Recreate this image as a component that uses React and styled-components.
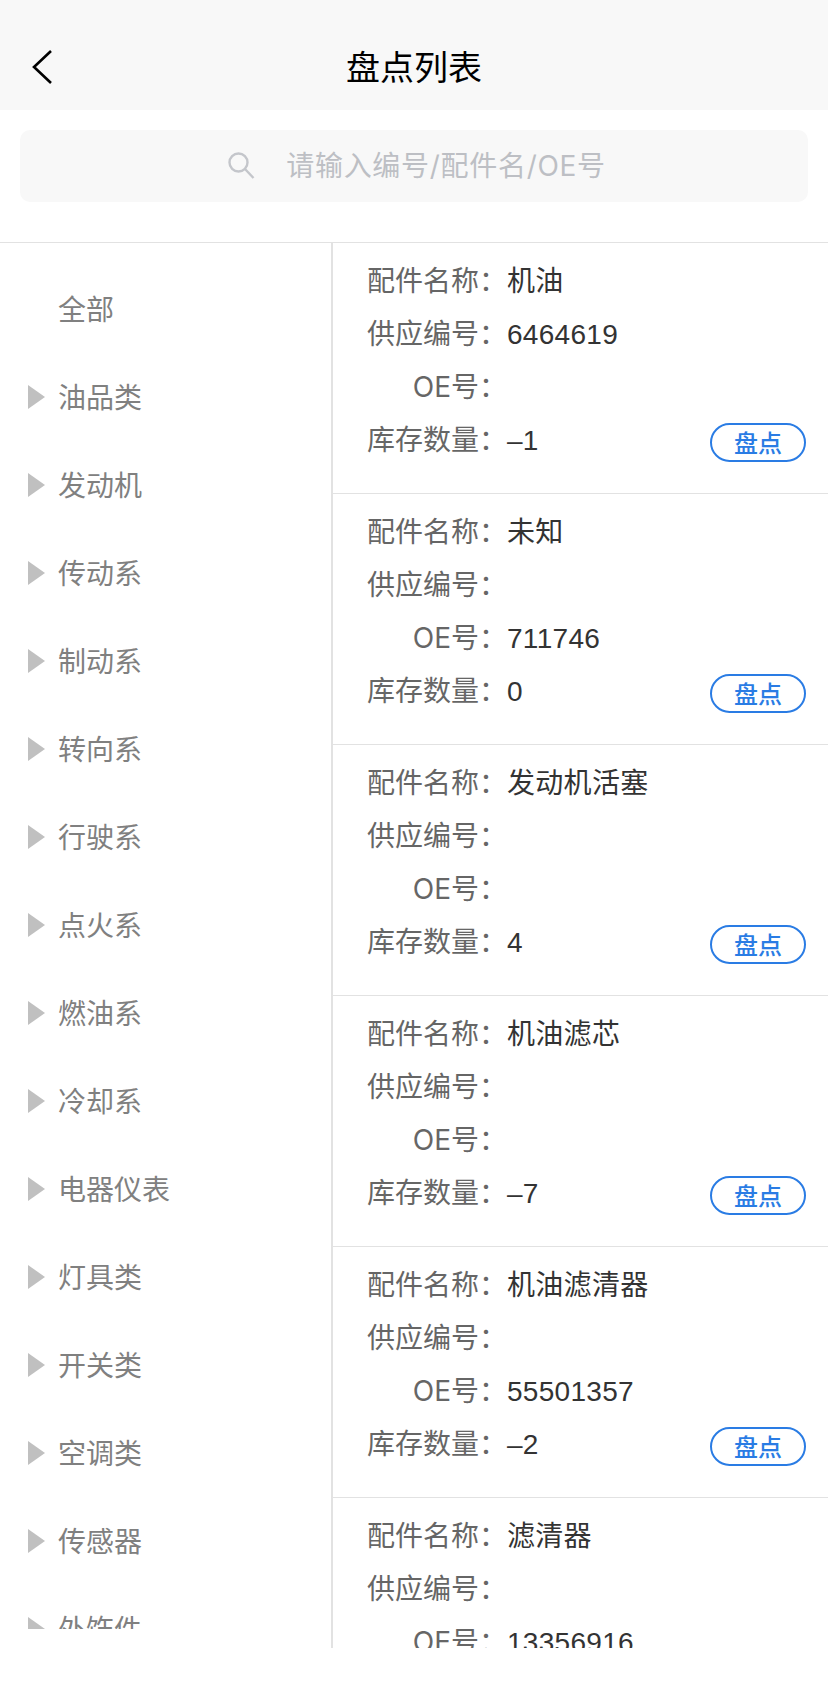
import React from 'react';
import styled, { createGlobalStyle } from 'styled-components';

const categories = ['全部', '油品类', '发动机', '传动系', '制动系', '转向系', '行驶系', '点火系', '燃油系', '冷却系', '电器仪表', '灯具类', '开关类', '空调类', '传感器', '外饰件'];

const parts = [
    { name: '机油', supply: '6464619', oe: '', stock: '–1' },
    { name: '未知', supply: '', oe: '711746', stock: '0' },
    { name: '发动机活塞', supply: '', oe: '', stock: '4' },
    { name: '机油滤芯', supply: '', oe: '', stock: '–7' },
    { name: '机油滤清器', supply: '', oe: '55501357', stock: '–2' },
    { name: '滤清器', supply: '', oe: '13356916', stock: '' },
];

function App() {
    return (
        <Page>
            <GlobalStyle />
            <Header>
                <BackButton>
                    <svg width="22" height="36" viewBox="0 0 22 36" fill="none">
                        <path d="M20 2 L3 18 L20 34" stroke="#000" strokeWidth="2.6" />
                    </svg>
                </BackButton>
                <Title>盘点列表</Title>
            </Header>

            <SearchBar>
                <svg width="28" height="28" viewBox="0 0 28 28" fill="none" stroke="#c4c6cb" strokeWidth="2.4">
                    <circle cx="10.5" cy="10.5" r="9" />
                    <path d="M17 17 L25.5 26" />
                </svg>
                <Placeholder>请输入编号/配件名/OE号</Placeholder>
            </SearchBar>

            <Main>
                <Sidebar>
                    {categories.map((name, i) => (
                        <Category key={name}>
                            <Caret $hidden={i === 0} />
                            {name}
                        </Category>
                    ))}
                </Sidebar>
                <PartList>
                    {parts.map(part => (
                        <PartItem key={part.name}>
                            <Row><Label>配件名称：</Label><Value>{part.name}</Value></Row>
                            <Row><Label>供应编号：</Label><Value>{part.supply}</Value></Row>
                            <Row><Label>OE号：</Label><Value>{part.oe}</Value></Row>
                            <Row>
                                <Label>库存数量：</Label>
                                <Value>{part.stock}</Value>
                                <CheckButton>盘点</CheckButton>
                            </Row>
                        </PartItem>
                    ))}
                </PartList>
            </Main>
        </Page>
    );
}

const GlobalStyle = createGlobalStyle`
    html, body {
        margin: 0;
        padding: 0;
        background: #fff;
    }
    * {
        box-sizing: border-box;
    }
`;

const Page = styled.div`
    width: 828px;
    height: 1688px;
    overflow: hidden;
    background: #fff;
    font-family: "Noto Sans CJK SC", "Noto Sans", sans-serif;
    font-size: 28px;
`;

const Header = styled.div`
    position: relative;
    height: 110px;
    padding-top: 44px;
    background: #f8f8f8;
    display: flex;
    justify-content: center;
`;

const BackButton = styled.div`
    position: absolute;
    left: 31px;
    top: 49px;
    line-height: 0;
`;

const Title = styled.div`
    font-size: 34px;
    line-height: 44px;
    color: #000;
`;

const SearchBar = styled.div`
    margin: 20px 20px 40px;
    height: 72px;
    padding-left: 6px;
    border-radius: 10px;
    background: #f8f8f8;
    display: flex;
    align-items: center;
    justify-content: center;
    gap: 30px;
`;

const Placeholder = styled.span`
    padding-bottom: 4px;
    color: #bdbfc4;
    font-family: Inter, "Noto Sans CJK SC", sans-serif;
    font-size: 28px;
    letter-spacing: 0.7px;
`;

const Main = styled.div`
    display: flex;
    height: 1406px;
    border-top: 1px solid #e2e2e2;
    overflow: hidden;
`;

const Sidebar = styled.div`
    width: 331px;
    height: 1386px;
    padding-top: 21px;
    overflow: hidden;
    flex-shrink: 0;
`;

const Category = styled.div`
    height: 88px;
    padding-left: 28px;
    display: flex;
    align-items: center;
    gap: 13px;
    color: #808080;
    font-size: 28px;
`;

const Caret = styled.i`
    width: 0;
    height: 0;
    margin-top: 2px;
    border-style: solid;
    border-width: 12px 0 12px 17px;
    border-color: transparent transparent transparent #c0c0c0;
    visibility: ${props => (props.$hidden ? 'hidden' : 'visible')};
`;

const PartList = styled.div`
    flex: 1;
    border-left: 2px solid #e2e2e2;
`;

const PartItem = styled.div`
    height: 251px;
    padding: 12px 22px 0 34px;
    border-bottom: 1px solid #e2e2e2;
`;

const Row = styled.div`
    height: 53px;
    line-height: 53px;
    display: flex;
    align-items: baseline;
`;

const Label = styled.span`
    width: 140px;
    text-align: right;
    color: #666;
    font-family: Inter, "Noto Sans CJK SC", sans-serif;
    flex-shrink: 0;
`;

const Value = styled.span`
    color: #333;
    font-family: "Liberation Sans", "Noto Sans CJK SC", sans-serif;
    letter-spacing: 0.3px;
`;

const CheckButton = styled.div`
    align-self: flex-start;
    margin: 9px 0 0 auto;
    width: 96px;
    height: 39px;
    padding-bottom: 2px;
    flex-shrink: 0;
    border: 2px solid #2a7ce4;
    border-radius: 20px;
    color: #2a7ce4;
    font-size: 24px;
    line-height: 1;
    font-weight: 500;
    display: flex;
    align-items: center;
    justify-content: center;
`;

export default App;
